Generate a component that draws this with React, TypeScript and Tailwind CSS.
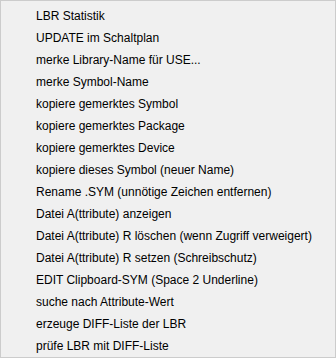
const items = [
  "LBR Statistik",
  "UPDATE im Schaltplan",
  "merke Library-Name für USE...",
  "merke Symbol-Name",
  "kopiere gemerktes Symbol",
  "kopiere gemerktes Package",
  "kopiere gemerktes Device",
  "kopiere dieses Symbol (neuer Name)",
  "Rename .SYM (unnötige Zeichen entfernen)",
  "Datei A(ttribute) anzeigen",
  "Datei A(ttribute) R löschen (wenn Zugriff verweigert)",
  "Datei A(ttribute) R setzen (Schreibschutz)",
  "EDIT Clipboard-SYM (Space 2 Underline)",
  "suche nach Attribute-Wert",
  "erzeuge DIFF-Liste der LBR",
  "prüfe LBR mit DIFF-Liste",
];

export default function App() {
  return (
    <div className="w-[336px] h-[358px] bg-[#f0f0f0] border border-[#cccccc] pt-1 font-['Liberation_Sans',sans-serif] text-[12px] text-black">
      {items.map((label) => (
        <div key={label} className="h-[22px] flex items-center pl-[35px] whitespace-nowrap">
          {label}
        </div>
      ))}
    </div>
  );
}
